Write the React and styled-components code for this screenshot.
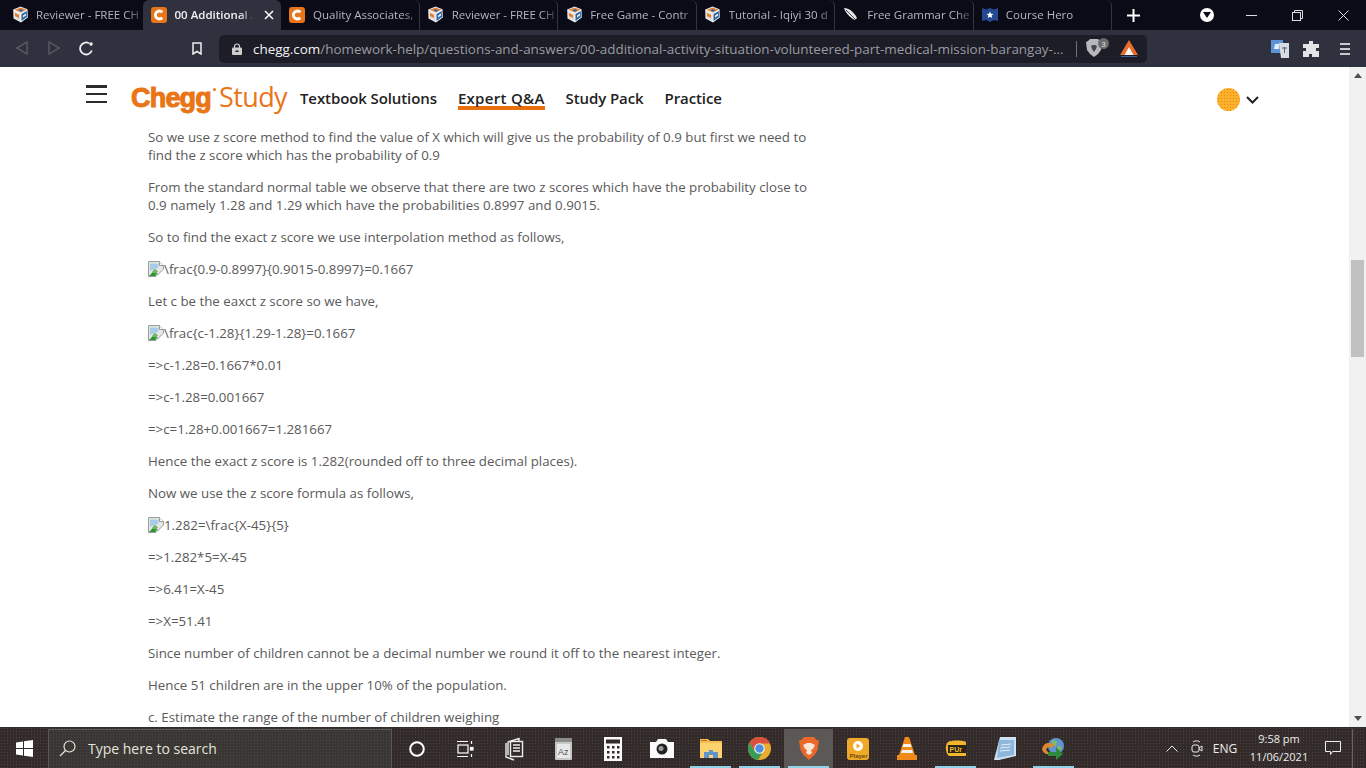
import React from 'react'
import styled, { createGlobalStyle } from 'styled-components'

const Global = createGlobalStyle`
html, body { margin: 0; padding: 0; background: #fff; overflow: hidden; }
* { box-sizing: border-box; }
`

const Screen = styled.div`
  width: 1366px;
  height: 768px;
  display: flex;
  flex-direction: column;
  overflow: hidden;
  font-family: "Open Sans", "Noto Sans", sans-serif;
`

/* browser chrome */
const TabStrip = styled.div`
  height: 30px;
  flex: none;
  display: flex;
  padding-left: 4px;
  background: #0b0b18;
`
const Tab = styled.div`
  width: 138.55px;
  height: 30px;
  flex: none;
  display: flex;
  align-items: center;
  padding: 0 0 1px 7px;
  gap: 7px;
  border-radius: 6px 6px 0 0;
  background: ${p => (p.$active ? '#2f323e' : 'transparent')};
  border-right: ${p => (p.$active || p.$plain ? 'none' : '1px solid #34353f')};
`
const FavSlot = styled.span`
  width: 18px;
  height: 18px;
  flex: none;
  display: flex;
  align-items: center;
  justify-content: center;
`
const TabTitle = styled.span`
  flex: 1;
  min-width: 0;
  white-space: nowrap;
  font-size: 11.5px;
  font-weight: ${p => (p.$active ? 600 : 400)};
  color: ${p => (p.$active ? '#f1f1f3' : '#b4b6bc')};
  -webkit-mask-image: linear-gradient(90deg, #000 84%, rgba(0, 0, 0, 0.15) 100%);
  mask-image: linear-gradient(90deg, #000 84%, rgba(0, 0, 0, 0.15) 100%);
`
const TabClose = styled.span`
  width: 20px;
  flex: none;
  margin-right: 2px;
  display: flex;
  justify-content: center;
`
const NewTab = styled.span`
  width: 42px;
  flex: none;
  display: flex;
  align-items: center;
  justify-content: center;
`
const WindowBtns = styled.div`
  margin-left: auto;
  display: flex;
  align-items: center;
`
const WinBtn = styled.span`
  width: 46px;
  display: flex;
  justify-content: center;
`
const MenuDot = styled.span`
  width: 14px;
  height: 14px;
  margin-right: 14px;
  border-radius: 50%;
  background: #fff;
  display: flex;
  align-items: center;
  justify-content: center;
`

const Toolbar = styled.div`
  height: 37px;
  flex: none;
  display: flex;
  align-items: center;
  background: #2f323e;
`
const NavBtn = styled.span`
  width: 32px;
  flex: none;
  display: flex;
  justify-content: center;
`
const NavGroup = styled.div`
  display: flex;
  padding-left: 6px;
  width: 181px;
`
const BookmarkSlot = styled.span`
  width: 32px;
  flex: none;
  display: flex;
  justify-content: center;
`
const UrlBar = styled.div`
  width: 928px;
  height: 28px;
  margin-left: 6px;
  flex: none;
  display: flex;
  align-items: center;
  padding-left: 13px;
  border-radius: 5px;
  background: #1c1d27;
`
const UrlText = styled.span`
  width: 823px;
  margin-left: 11px;
  flex: none;
  white-space: nowrap;
  font-size: 13.45px;
  color: #9a9ba1;
`
const UrlHost = styled.span`
  color: #f2f2f2;
`
const UrlSep = styled.span`
  width: 1px;
  height: 16px;
  background: #70717a;
  margin-right: 9px;
`
const ShieldWrap = styled.span`
  width: 24px;
  height: 20px;
  position: relative;
  display: flex;
  margin-right: 10px;
`
const ShieldBadge = styled.span`
  position: absolute;
  left: 12px;
  top: -1px;
  width: 11px;
  height: 11px;
  border-radius: 50%;
  background: #6b6c70;
  color: #eee;
  font-size: 8px;
  line-height: 11px;
  text-align: center;
`
const ToolRight = styled.div`
  display: flex;
  align-items: center;
  margin-left: 124px;
  gap: 14px;
`

/* page */
const Body = styled.div`
  flex: 1;
  min-height: 0;
  display: flex;
`
const Page = styled.div`
  flex: 1;
  min-width: 0;
  overflow: hidden;
  background: #fff;
`
const Header = styled.div`
  height: 61px;
  display: flex;
  align-items: center;
  padding: 2px 0 0 86px;
`
const Burger = styled.div`
  width: 21px;
  height: 18px;
  margin-top: -9px;
  display: flex;
  flex-direction: column;
  justify-content: space-between;
  span { height: 2.5px; background: #2b2b2b; display: block; }
`
const Logo = styled.div`
  margin-left: 24px;
  width: 169px;
  display: flex;
  align-items: baseline;
  color: #ea7516;
  margin-top: -5px;
`
const LogoBold = styled.span`
  font-family: "Liberation Sans", sans-serif;
  font-weight: 700;
  font-size: 27px;
  letter-spacing: -0.8px;
  -webkit-text-stroke: 1px #ea7516;
`
const LogoDot = styled.span`
  width: 3px;
  height: 3px;
  border-radius: 50%;
  background: #ea7516;
  align-self: flex-start;
  margin: 10px 3px 0 2px;
`
const LogoLight = styled.span`
  font-family: "Open Sans", sans-serif;
  font-weight: 400;
  font-size: 27px;
  letter-spacing: -0.6px;
`
const Nav = styled.nav`
  display: flex;
  gap: 21px;
`
const NavItem = styled.a`
  font-size: 15px;
  font-weight: 600;
  letter-spacing: ${p => (p.$on ? '0.3px' : '-0.1px')};
  color: #222;
  line-height: 16px;
  padding-top: 3px;
  border-bottom: 4px solid ${p => (p.$on ? '#e8700f' : 'transparent')};
`
const Account = styled.div`
  margin-left: auto;
  margin-right: 90px;
  display: flex;
  align-items: center;
  gap: 6px;
  margin-top: 2px;
`
const Avatar = styled.span`
  width: 23px;
  height: 23px;
  border-radius: 50%;
  background: radial-gradient(#e98a06 0.8px, #fbb02e 1px) 0 0 / 3px 3px;
`
const Article = styled.div`
  width: 672px;
  margin-left: 148px;
  font-size: 13.3px;
  line-height: 18px;
  color: #5a5a5a;
`
const Para = styled.p`
  margin: 0 0 14px;
`
const Formula = styled.p`
  margin: 0 0 14px;
  display: flex;
  align-items: center;
`
const Scrollbar = styled.div`
  width: 17px;
  flex: none;
  display: flex;
  flex-direction: column;
  background: #f1f1f1;
  padding: 0 2px;
`
const ScrollArrow = styled.span`
  height: 17px;
  flex: none;
  display: flex;
  align-items: center;
  justify-content: center;
`
const ScrollTrack = styled.div`
  flex: 1;
`
const ScrollThumb = styled.div`
  height: 97px;
  margin-top: 176px;
  background: #c1c1c1;
`

/* taskbar */
const Taskbar = styled.div`
  height: 41px;
  flex: none;
  display: flex;
  align-items: stretch;
  padding-top: 2px;
  color: #eee;
  background: radial-gradient(#4a4341 0.6px, transparent 0.8px) 0 0 / 3px 3px, #322b2a;
`
const StartBtn = styled.div`
  width: 48px;
  flex: none;
  display: flex;
  align-items: center;
  justify-content: center;
`
const SearchBox = styled.div`
  width: 344px;
  flex: none;
  display: flex;
  align-items: center;
  padding: 0 0 2px 10px;
  gap: 12px;
  border: 1px solid #5b5958;
  border-bottom: none;
  background: radial-gradient(#4b4846 0.6px, transparent 0.8px) 0 0 / 3px 3px, #393634;
  font-size: 14px;
  color: #e4e4dc;
`
const TaskSlots = styled.div`
  display: flex;
`
const Slot = styled.div`
  width: 49px;
  flex: none;
  display: flex;
  align-items: center;
  justify-content: center;
  position: relative;
  background: ${p => (p.$active ? '#5b5856' : 'transparent')};
  &::after {
    content: '';
    display: ${p => (p.$open ? 'block' : 'none')};
    position: absolute;
    left: 4px;
    right: 4px;
    bottom: 0;
    height: 2px;
    background: #8fd4e6;
  }
`
const Tray = styled.div`
  margin-left: auto;
  display: flex;
  align-items: center;
`
const TrayIcon = styled.span`
  width: 25px;
  flex: none;
  display: flex;
  justify-content: center;
`
const Lang = styled.span`
  width: 32px;
  font-size: 12px;
  color: #eee;
  text-align: center;
`
const Clock = styled.div`
  width: 70px;
  margin: -2px 0 0 3px;
  text-align: center;
  font-size: 11px;
  line-height: 18px;
  color: #eee;
`
const Notify = styled.span`
  width: 38px;
  flex: none;
  display: flex;
  justify-content: center;
`
const ShowDesktop = styled.span`
  width: 14px;
  height: 100%;
  flex: none;
  border-left: 1px solid #6a6462;
`

const Cube = () => (
  <svg width="17" height="17" viewBox="0 0 17 17">
    <path d="M8.500 .5 15.500 3.200 15.800 11.500 9 16.500 1.500 12.500 1.200 3.500z" fill="#eef0f2" />
    <path d="M8.500 1.500 14.500 3.600 9 6.500 2.500 3.800z" fill="#e8843a" />
    <path d="M8.500 3 11.500 4.500 9 5.800 6.500 4.500z" fill="#2f68aa" />
    <path d="M2.200 5 8.300 8V15L2.500 12z" fill="#e2ddd2" />
    <path d="M3 7l4 2v3L3 10z" fill="#e47d2a" />
    <path d="M9.500 8 14.800 5 15 11 9.500 15z" fill="#2b67a8" />
    <path d="M11 9.500l3-2v2l-3 2z" fill="#f2efe8" />
  </svg>
)
const CheggFav = () => (
  <svg width="16" height="16" viewBox="0 0 16 16">
    <rect width="16" height="16" rx="3" fill="#e8751a" />
    <path d="M11.300 5.300A4 4 0 1 0 11.300 10.700" fill="none" stroke="#fff" strokeWidth="2.800" />
  </svg>
)
const Feather = () => (
  <svg width="16" height="16" viewBox="0 0 16 16">
    <path d="M1 1c5 0 10 4 13 10l-2 2C8 11 3 7 1 1z" fill="#e4e4e4" />
    <path d="M3 3l11 11" stroke="#0b0b18" strokeWidth=".7" />
  </svg>
)
const HeroFav = () => (
  <svg width="16" height="16" viewBox="0 0 16 16">
    <path d="M0 1l4 1.500L8 1l4 1.500L16 1v13l-4-1-4 2-4-2-4 1z" fill="#234a91" />
    <path d="M8 4.500l1 2.300 2.400.200-1.800 1.600.600 2.400L8 9.700 5.800 11l.600-2.400L4.600 7l2.400-.200z" fill="#fff" />
  </svg>
)

const tabs = [
  { title: 'Reviewer - FREE CH', icon: <Cube /> },
  { title: '00 Additional A', icon: <CheggFav />, active: true },
  { title: 'Quality Associates,', icon: <CheggFav /> },
  { title: 'Reviewer - FREE CH', icon: <Cube /> },
  { title: 'Free Game - Contr', icon: <Cube /> },
  { title: 'Tutorial - Iqiyi 30 d', icon: <Cube /> },
  { title: 'Free Grammar Che', icon: <Feather /> },
  { title: 'Course Hero', icon: <HeroFav /> },
]

const BrokenImage = () => (
  <svg width="16" height="16" viewBox="0 0 16 16" style={{ flex: 'none' }}>
    <path d="M.5.500h11l4 4V8L8 15.500H.500z" fill="#e4e9e6" stroke="#9a9a9a" />
    <path d="M2 2.500h8.500v4L2 10z" fill="#a9cde8" />
    <path d="M1 15l5-5 3.500 2.500L7 15z" fill="#2f8f31" />
    <path d="M3.500 11.500 7 7.500l3 3-2 2z" fill="#76b56c" />
    <path d="M11.500.500v4h4" fill="#fff" stroke="#9a9a9a" />
  </svg>
)

const blocks = [
  { t: 'So we use z score method to find the value of X which will give us the probability of 0.9 but first we need to find the z score which has the probability of 0.9' },
  { t: 'From the standard normal table we observe that there are two z scores which have the probability close to 0.9 namely 1.28 and 1.29 which have the probabilities 0.8997 and 0.9015.' },
  { t: 'So to find the exact z score we use interpolation method as follows,' },
  { f: '\\frac{0.9-0.8997}{0.9015-0.8997}=0.1667' },
  { t: 'Let c be the eaxct z score so we have,' },
  { f: '\\frac{c-1.28}{1.29-1.28}=0.1667' },
  { t: '=>c-1.28=0.1667*0.01' },
  { t: '=>c-1.28=0.001667' },
  { t: '=>c=1.28+0.001667=1.281667' },
  { t: 'Hence the exact z score is 1.282(rounded off to three decimal places).' },
  { t: 'Now we use the z score formula as follows,' },
  { f: '1.282=\\frac{X-45}{5}' },
  { t: '=>1.282*5=X-45' },
  { t: '=>6.41=X-45' },
  { t: '=>X=51.41' },
  { t: 'Since number of children cannot be a decimal number we round it off to the nearest integer.' },
  { t: 'Hence 51 children are in the upper 10% of the population.' },
  { t: 'c. Estimate the range of the number of children weighing' },
]

const taskIcons = [
  { id: 'tasks', svg: <svg width="18" height="18" viewBox="0 0 18 18" fill="none" stroke="#fff" strokeWidth="1.200"><path d="M0 1.500h11M0 16.500h11" /><rect x="1" y="5" width="10" height="8" /><path d="M14.500 1v3M14.500 14v3" /><rect x="13.500" y="7.500" width="2.500" height="2.500" fill="#fff" /></svg> },
  { id: 'docs', svg: <svg width="20" height="24" viewBox="0 0 20 24" fill="none" stroke="#eee" strokeWidth="1.400"><path d="M3 18V5l11-3.500v3" /><path d="M1 6v14l8 3" /><rect x="5.500" y="4.500" width="12" height="15" fill="#322b2a" /><path d="M8 8h7M8 11h7M8 14h7" /></svg> },
  { id: 'az', svg: <svg width="17" height="22" viewBox="0 0 17 22"><rect width="17" height="22" rx="1" fill="#c8c8c8" /><rect width="17" height="4" fill="#8b8b8b" /><rect x="2" y="6" width="13" height="14" fill="#e8e8e8" /><text x="3" y="17" fontSize="9" fontFamily="Liberation Sans" fill="#555">Az</text></svg> },
  { id: 'calc', svg: <svg width="18" height="24" viewBox="0 0 18 24"><rect width="18" height="24" fill="#fafafa" /><rect x="2" y="2.500" width="14" height="4" fill="#322b2a" /><g fill="#322b2a"><rect x="3" y="9" width="2.500" height="2.500" /><rect x="8" y="9" width="2.500" height="2.500" /><rect x="13" y="9" width="2.500" height="2.500" /><rect x="3" y="14" width="2.500" height="2.500" /><rect x="8" y="14" width="2.500" height="2.500" /><rect x="13" y="14" width="2.500" height="2.500" /><rect x="3" y="19" width="2.500" height="2.500" /><rect x="8" y="19" width="2.500" height="2.500" /><rect x="13" y="19" width="2.500" height="2.500" /></g></svg> },
  { id: 'cam', svg: <svg width="24" height="19" viewBox="0 0 24 19"><path d="M0 3h6l2-3h8l2 3h6v16H0z" fill="#fafafa" /><circle cx="12" cy="10" r="5.500" fill="#222" /><circle cx="11" cy="9.500" r="2.500" fill="#999" /></svg> },
  { id: 'folder', open: true, svg: <svg width="22" height="19" viewBox="0 0 22 19"><path d="M0 0h8l2 2h12v17H0z" fill="#f4bf4f" /><rect y="4" width="22" height="15" fill="#fbd36f" /><path d="M1 1h6v1H1z" fill="#d9651e" /><path d="M4 19v-6h5v-2h4v2h5v6h-5v-3H9v3z" fill="#5f95c9" /></svg> },
  { id: 'chrome', open: true, svg: <svg width="23" height="23" viewBox="0 0 23 23"><circle cx="11.500" cy="11.500" r="11.500" fill="#e9ac2f" /><path d="M11.500 0a11.500 11.500 0 0 0-9.900 5.700l4.600 8L11.500 6.500h10.400A11.500 11.500 0 0 0 11.500 0z" fill="#d8503c" /><path d="M1.600 5.700A11.500 11.500 0 0 0 10 23l4.600-7.500-8.400-1.800z" fill="#3a9a57" /><circle cx="11.500" cy="11.500" r="5.300" fill="#f4f4f4" /><circle cx="11.500" cy="11.500" r="4.200" fill="#4f8fe0" /></svg> },
  { id: 'brave', open: true, active: true, svg: <svg width="20" height="23" viewBox="0 0 20 23"><path d="M5 0h10l2 2.500 3 1-1.500 9.500-3 5-5.500 5-5.500-5-3-5L0 3.500l3-1z" fill="#e9682a" /><path d="M6 7l2-1h4l2 1 2 1-2 4-2 1 1 3-3 2-3-2 1-3-2-1-2-4z" fill="#f9e5d6" /></svg> },
  { id: 'player', svg: <svg width="22" height="22" viewBox="0 0 22 22"><rect width="22" height="22" rx="3" fill="#efa928" /><circle cx="11" cy="8" r="5" fill="#fff" /><path d="M9.500 5.500 13.500 8l-4 2.500z" fill="#efa928" /><text x="2.500" y="19.500" fontSize="6" fontWeight="700" fontFamily="Liberation Sans" fill="#6a4a10">Player</text></svg> },
  { id: 'vlc', svg: <svg width="20" height="23" viewBox="0 0 20 23"><path d="M8 0h4l6 18h2v5H0v-5h2z" fill="#f08a1a" /><path d="M6.500 7h7l1 3h-9zM5 13h10l1 3H4z" fill="#f2f2f2" /></svg> },
  { id: 'pot', open: true, svg: <svg width="21" height="18" viewBox="0 0 21 18"><path d="M3 2C6 0 18 0 21 2v14H4C1 14-1 6 3 2z" fill="#f3b52b" /><path d="M3 5h18v8H3z" fill="#2b2418" /><text x="4.500" y="12" fontSize="7" fontWeight="700" fontFamily="Liberation Sans" fill="#f3b52b">PUr</text></svg> },
  { id: 'note', svg: <svg width="22" height="23" viewBox="0 0 22 23"><path d="M6 0h16v19l-17 4H0z" fill="#cfe2f5" /><path d="M5 3h15v15L3 21z" fill="#8fb7dc" /><path d="M7 8l10-1M6 11l10-1M6 14l10-1" stroke="#e4eef8" /></svg> },
  { id: 'idm', open: true, svg: <svg width="24" height="23" viewBox="0 0 24 23"><circle cx="14" cy="9" r="8" fill="#5f95d0" /><path d="M10 3l5 1-1 5-4-1zM16 9l4 1-2 4-3-2z" fill="#84b868" /><path d="M0 12C2 5 8 5 12 8l-2 3C8 9 5 10 4 13l4 4c-4 1-7-1-8-5z" fill="#dd8a2c" /><path d="M6 15l8 0 0-5 7 7-7 6v-4l-8 0z" fill="#2f8a3d" /></svg> },
]

const App = () => (
  <Screen>
    <Global />
    <TabStrip>
      {tabs.map((tab, i) => (
        <Tab key={i} $active={tab.active} $plain={i === 0 || i === 1}>
          <FavSlot>{tab.icon}</FavSlot>
          <TabTitle $active={tab.active}>{tab.title}</TabTitle>
          {tab.active && (
            <TabClose>
              <svg width="10" height="10" viewBox="0 0 10 10" stroke="#fff" strokeWidth="1.500"><path d="M1 1l8 8M9 1l-8 8" /></svg>
            </TabClose>
          )}
        </Tab>
      ))}
      <NewTab>
        <svg width="13" height="13" viewBox="0 0 13 13" stroke="#fff" strokeWidth="2"><path d="M6.500 0v13M0 6.500h13" /></svg>
      </NewTab>
      <WindowBtns>
        <MenuDot>
          <svg width="8" height="6" viewBox="0 0 8 6"><path d="M0 0h8L4 6z" fill="#0b0b18" /></svg>
        </MenuDot>
        <WinBtn><svg width="11" height="11" viewBox="0 0 11 11" stroke="#ddd"><path d="M0 5.500h11" /></svg></WinBtn>
        <WinBtn><svg width="11" height="11" viewBox="0 0 11 11" fill="none" stroke="#ddd"><rect x=".5" y="2.500" width="8" height="8" /><path d="M2.500 2.500v-2h8v8h-2" /></svg></WinBtn>
        <WinBtn><svg width="11" height="11" viewBox="0 0 11 11" stroke="#ddd"><path d="M.5.500l10 10M10.500.500l-10 10" /></svg></WinBtn>
      </WindowBtns>
    </TabStrip>

    <Toolbar>
      <NavGroup>
        <NavBtn><svg width="12" height="14" viewBox="0 0 12 14" fill="none" stroke="#5c5e68" strokeWidth="1.300"><path d="M11 1v12L1 7z" /></svg></NavBtn>
        <NavBtn><svg width="12" height="14" viewBox="0 0 12 14" fill="none" stroke="#5c5e68" strokeWidth="1.300"><path d="M1 1v12l10-6z" /></svg></NavBtn>
        <NavBtn><svg width="15" height="15" viewBox="0 0 15 15" fill="none" stroke="#eee" strokeWidth="1.800"><path d="M12.800 9.500A6 6 0 1 1 10 2.200" /><circle cx="12" cy="3" r="1.800" fill="#eee" stroke="none" /></svg></NavBtn>
      </NavGroup>
      <BookmarkSlot><svg width="10" height="13" viewBox="0 0 10 13" fill="none" stroke="#eee" strokeWidth="1.500"><path d="M1 1h8v11L5 9.500 1 12z" /></svg></BookmarkSlot>
      <UrlBar>
        <svg width="10" height="12" viewBox="0 0 10 12"><path d="M2.500 5V3.500a2.500 2.500 0 0 1 5 0V5" fill="none" stroke="#ccc" strokeWidth="1.200" /><rect y="4.500" width="10" height="7.500" rx="1" fill="#ccc" /><rect x="3.500" y="7.500" width="3" height="1.500" fill="#1c1d27" /></svg>
        <UrlText><UrlHost>chegg.com</UrlHost>/homework-help/questions-and-answers/00-additional-activity-situation-volunteered-part-medical-mission-barangay-...</UrlText>
        <UrlSep />
        <ShieldWrap>
          <svg width="16" height="18" viewBox="0 0 16 18"><path d="M4 0h8l2 2 2 1-1 8-3 4-4 3-4-3-3-4-1-8 2-1z" fill="#b8b8bc" /><path d="M5 7l2-1h2l2 1-1 3-2 3-2-3z" fill="#45464e" /></svg>
          <ShieldBadge>3</ShieldBadge>
        </ShieldWrap>
        <svg width="18" height="17" viewBox="0 0 18 17"><path d="M9 0l9 15H0z" fill="#e9702c" /><path d="M9 7l4.500 8h-9z" fill="#f6f6f6" /><path d="M1 16h16v1H1z" fill="#3f5f9a" /></svg>
      </UrlBar>
      <ToolRight>
        <svg width="18" height="18" viewBox="0 0 18 18"><rect width="12" height="13" fill="#5f93d8" /><path d="M8 3h10v15H10z" fill="#d7dbe2" /><path d="M4 4h4v5H3z" fill="#e4eefb" /><path d="M11 8h5M13.500 7v6" stroke="#5b6270" /></svg>
        <svg width="16" height="16" viewBox="0 0 16 16"><path d="M6 0h4v3h6v4h-3v3h3v6H9v-3H6v3H0v-6h3V7H0V3h6z" fill="#e4e4e6" /></svg>
        <svg width="18" height="14" viewBox="0 0 18 14" stroke="#c9cace" strokeWidth="2" style={{ marginLeft: 3 }}><path d="M4 2h10M4 7h10M4 12h10" /></svg>
      </ToolRight>
    </Toolbar>

    <Body>
      <Page>
        <Header>
          <Burger><span /><span /><span /></Burger>
          <Logo>
            <LogoBold>Chegg</LogoBold>
            <LogoDot />
            <LogoLight>Study</LogoLight>
          </Logo>
          <Nav>
            <NavItem>Textbook Solutions</NavItem>
            <NavItem $on>Expert Q&amp;A</NavItem>
            <NavItem>Study Pack</NavItem>
            <NavItem>Practice</NavItem>
          </Nav>
          <Account>
            <Avatar />
            <svg width="13" height="8" viewBox="0 0 13 8" fill="none" stroke="#222" strokeWidth="2"><path d="M1 1l5.500 5.500L12 1" /></svg>
          </Account>
        </Header>
        <Article>
          {blocks.map((b, i) =>
            b.f ? (
              <Formula key={i}><BrokenImage />{b.f}</Formula>
            ) : (
              <Para key={i}>{b.t}</Para>
            )
          )}
        </Article>
      </Page>
      <Scrollbar>
        <ScrollArrow><svg width="8" height="5" viewBox="0 0 8 5"><path d="M4 0l4 5H0z" fill="#505050" /></svg></ScrollArrow>
        <ScrollTrack><ScrollThumb /></ScrollTrack>
        <ScrollArrow><svg width="8" height="5" viewBox="0 0 8 5"><path d="M0 0h8L4 5z" fill="#505050" /></svg></ScrollArrow>
      </Scrollbar>
    </Body>

    <Taskbar>
      <StartBtn>
        <svg width="17" height="17" viewBox="0 0 17 17" fill="#fff"><path d="M0 2.400 7 1.400V8H0zM8 1.300 17 0v8H8zM0 9h7v6.600L0 14.600zM8 9h9v8l-9-1.300z" /></svg>
      </StartBtn>
      <SearchBox>
        <svg width="17" height="17" viewBox="0 0 17 17" fill="none" stroke="#e4e4dc" strokeWidth="1.200"><circle cx="10.500" cy="6.500" r="5.500" /><path d="M6.500 10.500 1 16" /></svg>
        Type here to search
      </SearchBox>
      <TaskSlots>
        <Slot>
          <svg width="16" height="16" viewBox="0 0 16 16" fill="none" stroke="#fff" strokeWidth="2"><circle cx="8" cy="8" r="6.800" /></svg>
        </Slot>
        {taskIcons.map(item => (
          <Slot key={item.id} $open={item.open} $active={item.active}>{item.svg}</Slot>
        ))}
      </TaskSlots>
      <Tray>
        <TrayIcon><svg width="12" height="7" viewBox="0 0 12 7" fill="none" stroke="#eee"><path d="M.5 6.500 6 1l5.500 5.500" /></svg></TrayIcon>
        <TrayIcon><svg width="12" height="17" viewBox="0 0 12 17" fill="none" stroke="#eee"><path d="M2 2C4 .5 7 .5 9 2M2 15c2 1.500 5 1.500 7 0" /><rect x="1" y="5" width="7" height="7" rx="2" /><path d="M8 8l3-2v5l-3-2" /></svg></TrayIcon>
        <Lang>ENG</Lang>
        <Clock>9:58 pm<br />11/06/2021</Clock>
        <Notify><svg width="16" height="15" viewBox="0 0 16 15" fill="none" stroke="#eee"><path d="M.5.500h15v10H7.500l-2 3v-3h-5z" /></svg></Notify>
        <ShowDesktop />
      </Tray>
    </Taskbar>
  </Screen>
)

export default App
